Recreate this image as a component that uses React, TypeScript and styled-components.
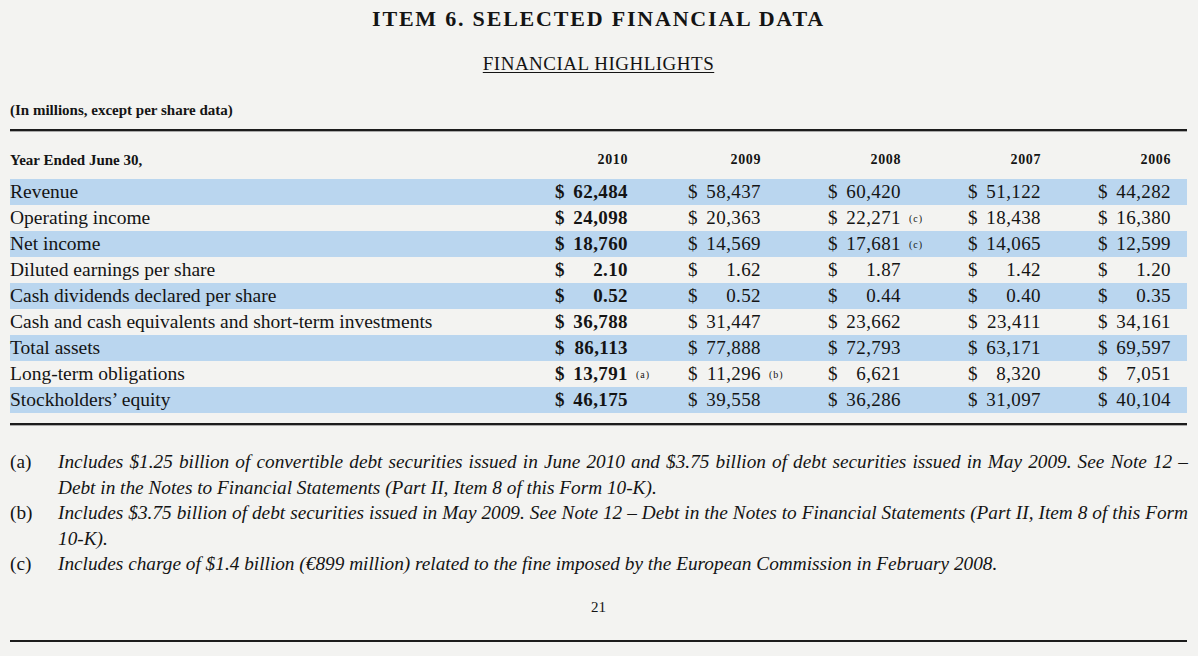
import styled, { createGlobalStyle } from "styled-components";

const GlobalStyle = createGlobalStyle`
  body {
    margin: 0;
    background: #f3f3f1;
    color: #141414;
    font-family: "Liberation Serif", "Times New Roman", serif;
  }
`;

const COLS = "545px 73px 60px 73px 67px 73px 67px 73px 57px 73px 1fr";

const Page = styled.div`
  width: 1177px;
  padding: 6px 0 0 10px;
  display: flex;
  flex-direction: column;
`;
const Title = styled.h1`
  margin: 0;
  text-align: center;
  font-size: 22px;
  line-height: 26px;
  font-weight: 700;
  letter-spacing: 1.8px;
`;
const Subtitle = styled.h2`
  margin: 21px 0 0;
  text-align: center;
  font-size: 19px;
  line-height: 22px;
  font-weight: 400;
  letter-spacing: 0.5px;
  text-decoration: underline;
  text-underline-offset: 2px;
`;
const Units = styled.div`
  margin-top: 26px;
  font-size: 15px;
  line-height: 18px;
  font-weight: 700;
  letter-spacing: 0;
`;
const Rule = styled.div<{ $top: number }>`
  margin-top: ${(p) => p.$top}px;
  height: 0;
  border-top: 2px solid #1c1c1c;
  box-shadow: 0 1px 0 #a9a9a9;
`;
const HeadRow = styled.div`
  display: grid;
  grid-template-columns: ${COLS};
  padding: 20px 0 10px;
  font-size: 15px;
  line-height: 18px;
  font-weight: 700;
`;
const Year = styled.div`
  text-align: right;
  font-size: 14px;
  letter-spacing: 0.6px;
`;
const Row = styled.div<{ $striped: boolean }>`
  display: grid;
  grid-template-columns: ${COLS};
  height: 26px;
  align-items: center;
  background: ${(p) => (p.$striped ? "#bad6ef" : "transparent")};
  font-size: 19.5px;
`;
const Label = styled.div`
  white-space: nowrap;
`;
const Amount = styled.div<{ $bold: boolean }>`
  display: flex;
  justify-content: space-between;
  font-size: 19px;
  font-weight: ${(p) => (p.$bold ? 700 : 400)};
  letter-spacing: 0.4px;
`;
const Note = styled.div`
  font-size: 10px;
  padding-left: 8px;
  letter-spacing: 1px;
`;
const Footnotes = styled.div`
  margin-top: 24px;
  display: flex;
  flex-direction: column;
`;
const Footnote = styled.div`
  display: grid;
  grid-template-columns: 48px 1130px;
  font-size: 19.3px;
  line-height: 25.5px;
`;
const Mark = styled.div`
  font-style: normal;
`;
const Line = styled.div<{ $justify?: boolean }>`
  font-style: italic;
  white-space: nowrap;
  text-align: ${(p) => (p.$justify ? "justify" : "left")};
  text-align-last: ${(p) => (p.$justify ? "justify" : "left")};
`;
const PageNum = styled.div`
  margin-top: 20px;
  text-align: center;
  font-size: 15px;
  line-height: 20px;
`;

type Cell = [string, string?];
const rows: [string, Cell, Cell, Cell, Cell, Cell][] = [
  ["Revenue", ["62,484"], ["58,437"], ["60,420"], ["51,122"], ["44,282"]],
  ["Operating income", ["24,098"], ["20,363"], ["22,271", "(c)"], ["18,438"], ["16,380"]],
  ["Net income", ["18,760"], ["14,569"], ["17,681", "(c)"], ["14,065"], ["12,599"]],
  ["Diluted earnings per share", ["2.10"], ["1.62"], ["1.87"], ["1.42"], ["1.20"]],
  ["Cash dividends declared per share", ["0.52"], ["0.52"], ["0.44"], ["0.40"], ["0.35"]],
  ["Cash and cash equivalents and short-term investments", ["36,788"], ["31,447"], ["23,662"], ["23,411"], ["34,161"]],
  ["Total assets", ["86,113"], ["77,888"], ["72,793"], ["63,171"], ["69,597"]],
  ["Long-term obligations", ["13,791", "(a)"], ["11,296", "(b)"], ["6,621"], ["8,320"], ["7,051"]],
  ["Stockholders’ equity", ["46,175"], ["39,558"], ["36,286"], ["31,097"], ["40,104"]],
];

const years = ["2010", "2009", "2008", "2007", "2006"];

export default function App() {
  return (
    <>
      <GlobalStyle />
      <Page>
        <Title>ITEM 6. SELECTED FINANCIAL DATA</Title>
        <Subtitle>FINANCIAL HIGHLIGHTS</Subtitle>
        <Units>(In millions, except per share data)</Units>
        <Rule $top={10} />
        <HeadRow>
          <div>Year Ended June 30,</div>
          {years.map((y) => (
            <>
              <Year key={y}>{y}</Year>
              <div />
            </>
          ))}
        </HeadRow>
        {rows.map(([label, ...cells], i) => (
          <Row key={label} $striped={i % 2 === 0}>
            <Label>{label}</Label>
            {cells.map(([value, note], j) => (
              <>
                <Amount key={"a" + j} $bold={j === 0}>
                  <span>$</span>
                  <span>{value}</span>
                </Amount>
                <Note key={"n" + j}>{note}</Note>
              </>
            ))}
          </Row>
        ))}
        <Rule $top={10} />
        <Footnotes>
          <Footnote>
            <Mark>(a)</Mark>
            <div>
              <Line $justify>
                Includes $1.25 billion of convertible debt securities issued in June 2010 and $3.75 billion of debt
                securities issued in May 2009. See Note 12 –
              </Line>
              <Line>Debt in the Notes to Financial Statements (Part II, Item 8 of this Form 10-K).</Line>
            </div>
          </Footnote>
          <Footnote>
            <Mark>(b)</Mark>
            <div>
              <Line $justify>
                Includes $3.75 billion of debt securities issued in May 2009. See Note 12 – Debt in the Notes to
                Financial Statements (Part II, Item 8 of this Form
              </Line>
              <Line>10-K).</Line>
            </div>
          </Footnote>
          <Footnote>
            <Mark>(c)</Mark>
            <div>
              <Line>
                Includes charge of $1.4 billion (€899 million) related to the fine imposed by the European Commission
                in February 2008.
              </Line>
            </div>
          </Footnote>
        </Footnotes>
        <PageNum>21</PageNum>
        <Rule $top={23} />
      </Page>
    </>
  );
}
